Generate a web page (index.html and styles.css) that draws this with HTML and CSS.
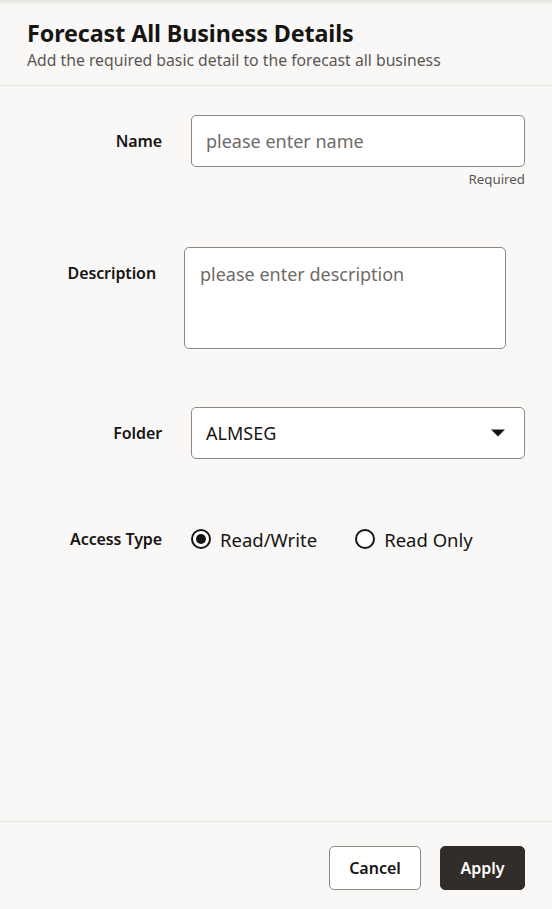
FILE: index.html
```html
<!DOCTYPE html>
<html lang="en">
<head>
<meta charset="utf-8">
<title>Forecast All Business Details</title>
<link rel="stylesheet" href="styles.css">
</head>
<body>
<div class="dialog">
  <header class="head">
    <h1 class="title">Forecast All Business Details</h1>
    <p class="subtitle">Add the required basic detail to the forecast all business</p>
  </header>
  <main class="body">
    <div class="row row-name">
      <label class="label">Name</label>
      <div class="field">
        <div class="input"><span class="placeholder">please enter name</span></div>
        <div class="help">Required</div>
      </div>
    </div>
    <div class="row row-desc">
      <label class="label label-desc">Description</label>
      <div class="field field-desc">
        <div class="textarea"><span class="placeholder">please enter description</span></div>
      </div>
    </div>
    <div class="row row-folder">
      <label class="label">Folder</label>
      <div class="field">
        <div class="select"><span class="value">ALMSEG</span>
          <svg class="caret" width="14" height="8" viewBox="0 0 14 8"><path d="M0 0.5 H14 L7 7.5 Z" fill="#161513"/></svg>
        </div>
      </div>
    </div>
    <div class="row row-access">
      <label class="label">Access Type</label>
      <div class="radios">
        <span class="radio"><span class="circle checked"></span>Read/Write</span>
        <span class="radio"><span class="circle"></span>Read Only</span>
      </div>
    </div>
  </main>
  <footer class="foot">
    <button class="btn btn-cancel">Cancel</button>
    <button class="btn btn-apply">Apply</button>
  </footer>
</div>
</body>
</html>
```
FILE: styles.css
```css
html, body {
  margin: 0;
  padding: 0;
  background: #f9f8f6;
}
body {
  font-family: "Noto Sans", "Open Sans", sans-serif;
  color: #161513;
}
.dialog {
  width: 552px;
  height: 909px;
  display: flex;
  flex-direction: column;
  background: #f9f8f6;
  position: relative;
}
.dialog::before {
  content: "";
  position: absolute;
  left: 0;
  right: 0;
  top: 0;
  height: 6px;
  background: linear-gradient(#e4e2df, rgba(249,248,246,0));
}
.head {
  padding: 17px 27px 14px;
  border-bottom: 1px solid #e8e6e3;
}
.title {
  margin: 0;
  font-size: 23.3px;
  line-height: 32px;
  font-weight: 700;
  letter-spacing: -0.1px;
}
.subtitle {
  margin: 0;
  font-size: 15.75px;
  line-height: 22px;
  color: #5b5652;
}
.body {
  flex: 1;
  padding: 29px 27px 0 0;
}
.row {
  display: flex;
  align-items: flex-start;
}
.label {
  width: 162px;
  flex: none;
  text-align: right;
  font-size: 16px;
  font-weight: 600;
  line-height: 52px;
  margin-right: 29px;
  letter-spacing: -0.1px;
}
.field {
  flex: 1;
}
.input, .select {
  height: 50px;
  border: 1px solid #8c8985;
  border-radius: 5px;
  background: #fff;
  display: flex;
  align-items: center;
  padding: 0 14px;
}
.placeholder {
  font-size: 18px;
  color: #6f6a66;
}
.help {
  text-align: right;
  font-size: 13.3px;
  line-height: 18px;
  margin-top: 3px;
  color: #5b5652;
}
.row-desc {
  margin-top: 59px;
}
.label-desc {
  width: 156px;
  margin-right: 28px;
}
.field-desc {
  flex: none;
  width: 322px;
}
.textarea {
  border: 1px solid #8c8985;
  border-radius: 5px;
  background: #fff;
  padding: 13px 15px;
  box-sizing: border-box;
  height: 102px;
}
.textarea .placeholder {
  line-height: 26px;
}
.row-folder {
  margin-top: 58px;
}
.select {
  justify-content: space-between;
}
.value {
  font-size: 18px;
  color: #161513;
}
.caret {
  margin-right: 5px;
}
.row-access {
  margin-top: 54px;
}
.radios {
  display: flex;
  align-items: center;
  height: 52px;
  gap: 38px;
}
.radio {
  display: flex;
  align-items: center;
  font-size: 18.5px;
  gap: 9px;
}
.circle {
  width: 16px;
  height: 16px;
  border: 2px solid #161513;
  border-radius: 50%;
  box-sizing: content-box;
  position: relative;
  background: #fff;
}
.circle.checked::after {
  content: "";
  position: absolute;
  left: 3px;
  top: 3px;
  width: 10px;
  height: 10px;
  border-radius: 50%;
  background: #161513;
}
.foot {
  border-top: 1px solid #e8e6e3;
  height: 88px;
  box-sizing: border-box;
  display: flex;
  justify-content: flex-end;
  align-items: flex-start;
  padding: 24px 27px 0 0;
  gap: 19px;
}
.btn {
  height: 44px;
  border-radius: 5px;
  font-family: inherit;
  font-size: 16px;
  font-weight: 600;
  padding: 0 10px;
}
.btn-cancel {
  background: #fff;
  border: 1px solid #8c8985;
  color: #161513;
  width: 92px;
}
.btn-apply {
  background: #312d2a;
  border: 1px solid #312d2a;
  color: #fff;
  width: 85px;
}
```
